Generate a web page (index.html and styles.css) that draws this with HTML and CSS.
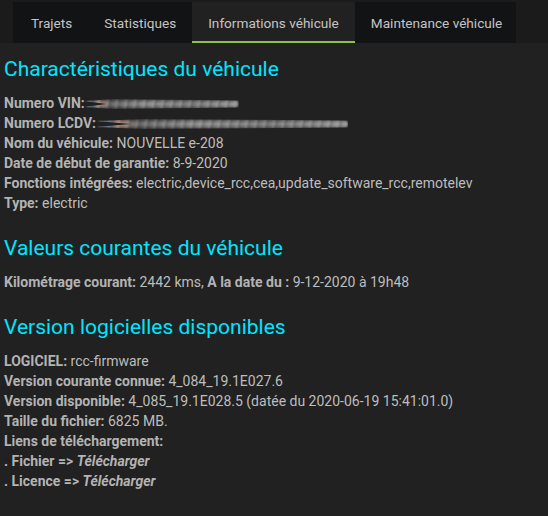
FILE: index.html
```html
<!DOCTYPE html>
<html lang="fr">
<head>
<meta charset="utf-8">
<link rel="stylesheet" href="styles.css">
</head>
<body>
<header class="topbar">
  <nav class="tabs">
    <a class="tab">Trajets</a>
    <a class="tab">Statistiques</a>
    <a class="tab active">Informations véhicule</a>
    <a class="tab">Maintenance véhicule</a>
  </nav>
</header>
<main class="content">
  <h2 class="title">Charactéristiques du véhicule</h2>
  <div class="block">
    <div class="line"><b>Numero VIN:</b><span class="smear smear-vin"></span></div>
    <div class="line"><b>Numero LCDV:</b><span class="smear smear-lcdv"></span></div>
    <div class="line"><b>Nom du véhicule:</b> NOUVELLE e-208</div>
    <div class="line"><b>Date de début de garantie:</b> 8-9-2020</div>
    <div class="line"><b>Fonctions intégrées:</b> electric,device_rcc,cea,update_software_rcc,remotelev</div>
    <div class="line"><b>Type:</b> electric</div>
  </div>
  <h2 class="title">Valeurs courantes du véhicule</h2>
  <div class="block">
    <div class="line"><b>Kilométrage courant:</b> 2442 kms, <b>A la date du :</b> 9-12-2020 à 19h48</div>
  </div>
  <h2 class="title">Version logicielles disponibles</h2>
  <div class="block">
    <div class="line"><b>LOGICIEL:</b> rcc-firmware</div>
    <div class="line"><b>Version courante connue:</b> 4_084_19.1E027.6</div>
    <div class="line"><b>Version disponible:</b> 4_085_19.1E028.5 (datée du 2020-06-19 15:41:01.0)</div>
    <div class="line"><b>Taille du fichier:</b> 6825 MB.</div>
    <div class="line"><b>Liens de téléchargement:</b></div>
    <div class="line"><b>. Fichier =&gt; <i>Télécharger</i></b></div>
    <div class="line"><b>. Licence =&gt; <i>Télécharger</i></b></div>
  </div>
</main>
</body>
</html>
```

FILE: styles.css
```css
html, body {
  margin: 0;
  padding: 0;
  background: #212121;
}
body {
  font-family: Roboto, "Noto Sans", sans-serif;
  color: #bdbdbd;
  height: 516px;
  overflow: hidden;
}
.topbar {
  background: #1b1b1b;
  padding: 2px 0 0 13px;
}
.tabs {
  display: flex;
  width: 501px;
  padding-left: 2px;
  background: #121314;
}
.tab {
  display: block;
  height: 39px;
  line-height: 42px;
  padding: 0 16px;
  font-size: 13.6px;
  color: #c4c4c4;
  border-bottom: 2px solid transparent;
  white-space: nowrap;
}
.tab.active {
  background: #212121;
  border-bottom-color: #8bc34a;
}
.content {
  padding: 0 4px;
}
.title {
  margin: 21px 0 0;
  font-size: 21px;
  font-weight: 400;
  color: #00e5ff;
  line-height: 28px;
}
.content .title:first-child {
  margin-top: 12px;
}
.block {
  margin-top: 10px;
  font-size: 14px;
  line-height: 20px;
}
.line b {
  font-weight: 700;
  color: #b3b3b3;
}
.smear {
  display: inline-block;
  vertical-align: -1px;
  height: 10px;
  border-radius: 2px 6px 6px 2px;
  background:
    repeating-linear-gradient(100deg, rgba(255,255,255,0) 0 4px, rgba(210,210,210,0.25) 4px 6px, rgba(30,30,30,0.2) 6px 9px),
    linear-gradient(180deg, rgba(40,40,40,0.6) 0%, rgba(200,200,200,0.35) 50%, rgba(40,40,40,0.6) 100%),
    linear-gradient(90deg, #c9d8f0 0%, #4a6fa5 5%, #d89a7a 9%, #4e4e4e 16%, #8a8a8a 40%, #6d6d6d 70%, #9a9a9a 100%);
  clip-path: polygon(0 20%, 14% 50%, 0 80%, 18% 100%, 100% 85%, 100% 15%, 18% 0);
  filter: blur(0.9px);
}
.smear-vin {
  width: 154px;
}
.smear-lcdv {
  width: 252px;
}
```
